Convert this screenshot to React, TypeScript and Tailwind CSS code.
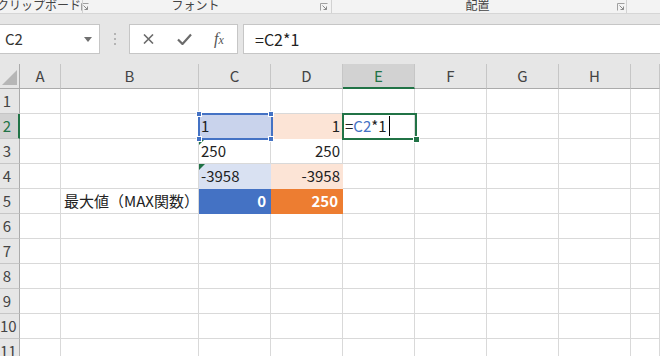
import React from 'react';

type Cell = {
  text?: React.ReactNode;
  right?: boolean;
  bold?: boolean;
  fill?: string;
  tri?: boolean;
};

const columns = ['A', 'B', 'C', 'D', 'E', 'F', 'G', 'H', ''];
const rows = [1, 2, 3, 4, 5, 6, 7, 8, 9, 10, 11];

const cells: Record<string, Cell> = {
  C2: { text: '1', fill: 'bg-[#c9d3ec] border-[#c9d3ec]' },
  D2: { text: '1', right: true, fill: 'bg-[#fce4d6] border-[#fce4d6]' },
  C3: { text: '250', tri: true },
  D3: { text: '250', right: true },
  C4: { text: '-3958', tri: true, fill: 'bg-[#d9e1f2] border-[#d9e1f2]' },
  D4: { text: '-3958', right: true, fill: 'bg-[#fce4d6] border-[#fce4d6]' },
  B5: { text: '最大値（MAX関数）' },
  C5: { text: '0', right: true, bold: true, fill: 'bg-[#4472c4] border-[#4472c4] text-white' },
  D5: { text: '250', right: true, bold: true, fill: 'bg-[#ed7d31] border-[#ed7d31] text-white' },
  E2: {
    text: (
      <>
        =<span className="text-[#4472c4]">C2</span>*1
      </>
    ),
  },
};

const Launcher = () => (
  <svg width="8" height="8" viewBox="0 0 8 8" className="mt-[3px] shrink-0">
    <path d="M0.5 7.5V0.5H7.5" fill="none" stroke="#a0a0a0" strokeWidth="1" />
    <path d="M2.5 2.5L6.5 6.5M6.5 3.5V6.5H3.5" fill="none" stroke="#8a8a8a" strokeWidth="1" />
  </svg>
);

const Ribbon = () => (
  <div className="flex h-[14px] overflow-hidden border-b border-[#d6d6d6] bg-[#f3f3f3] text-[12px] leading-[12px] text-[#444]">
    <div className="flex w-[82px] justify-between pr-[4px]">
      <span className="-ml-[3px] -mt-[1px] whitespace-nowrap">クリップボード</span>
      <Launcher />
    </div>
    <div className="h-full w-px bg-[#d2d2d2]" />
    <div className="flex w-[248px] pr-[3px]">
      <span className="-mt-[1px] flex-1 pr-[12px] text-center">フォント</span>
      <Launcher />
    </div>
    <div className="h-full w-px bg-[#d2d2d2]" />
    <div className="flex w-[294px] pr-[1px]">
      <span className="-mt-[1px] flex-1 pl-[6px] text-center">配置</span>
      <Launcher />
    </div>
    <div className="h-full w-px bg-[#d2d2d2]" />
  </div>
);

const FormulaBar = () => (
  <div className="flex h-[50px] items-start bg-[#e6e6e6] pt-[10px]">
    <div className="flex h-[30px] w-[100px] items-center justify-between border border-l-0 border-[#c6c6c6] bg-white pl-[5px] pr-[7px] text-[15px] text-[#333]">
      <span>C2</span>
      <svg width="8" height="5" viewBox="0 0 8 5">
        <path d="M0 0H8L4 5Z" fill="#707070" />
      </svg>
    </div>
    <div className="flex h-[30px] w-[29px] flex-col items-center justify-center gap-[3px]">
      <span className="h-[2px] w-[2px] bg-[#b4b4b4]" />
      <span className="h-[2px] w-[2px] bg-[#b4b4b4]" />
      <span className="h-[2px] w-[2px] bg-[#b4b4b4]" />
    </div>
    <div className="flex h-[30px] w-[109px] items-center border border-[#c6c6c6] bg-white pl-[13px]">
      <svg width="11" height="10" viewBox="0 0 11 10">
        <path d="M1 0.5L10 9.5M10 0.5L1 9.5" stroke="#6b6b6b" strokeWidth="1.6" />
      </svg>
      <svg width="15" height="12" viewBox="0 0 15 12" className="ml-[23px]">
        <path d="M1 6.5L5.5 11L14 1.5" fill="none" stroke="#6b6b6b" strokeWidth="2.2" />
      </svg>
      <span className="ml-[22px] font-['Liberation_Serif',serif] text-[16px] italic leading-none text-[#555]">
        f<span className="text-[12px]">x</span>
      </span>
    </div>
    <div className="ml-[5px] flex h-[30px] flex-1 items-center border border-r-0 border-[#c6c6c6] bg-white pl-[11px] text-[16px] text-[#222]">
      =C2*1
    </div>
  </div>
);

const Sheet = () => (
  <div className="relative">
    <div className="grid auto-rows-[25px] grid-cols-[20px_41px_138px_72px_72px_72px_72px_72px_72px_29px]">
      {/* 見出し行 */}
      <div className="relative border-r border-b border-[#ababab] bg-[#e6e6e6]">
        <svg width="20" height="25" viewBox="0 0 20 25" className="absolute inset-0">
          <path d="M2 21H17V6Z" fill="#b6b6b6" />
        </svg>
      </div>
      {columns.map((c, i) => (
        <div
          key={`h${i}`}
          className={
            c === 'E'
              ? 'flex items-center justify-center border-r border-b-2 border-r-[#c6c6c6] border-b-[#217346] bg-[#d2d2d2] pt-[2px] text-[15px] text-[#217346]'
              : 'flex items-center justify-center border-r border-b border-r-[#c6c6c6] border-b-[#ababab] bg-[#e6e6e6] text-[15px] text-[#444]'
          }
        >
          {c}
        </div>
      ))}

      {rows.map((r) => (
        <React.Fragment key={r}>
          <div
            className={
              r === 2
                ? 'flex items-center border-r-2 border-b border-r-[#217346] border-b-[#c6c6c6] bg-[#d2d2d2] text-[15px] text-[#217346]'
                : 'flex items-center border-r border-b border-r-[#ababab] border-b-[#c6c6c6] bg-[#e6e6e6] text-[15px] text-[#444]'
            }
          >
            <span className="w-[14px] text-center">{r}</span>
          </div>
          {columns.map((c, i) => {
            const cell = cells[`${c}${r}`];
            const base = cell?.fill ?? 'bg-white border-[#d9d9d9]';
            return (
              <div
                key={`${c}${r}${i}`}
                className={`relative flex items-center overflow-visible whitespace-nowrap border-r border-b text-[15px] ${base} ${
                  cell?.right ? 'justify-end' : 'justify-start'
                } ${cell?.bold ? 'pr-[4px] font-bold' : cell?.right ? 'pr-[2px]' : 'pl-[2px]'} ${
                  c === 'B' ? 'pl-[3px]' : ''
                } ${cell?.fill?.includes('text-white') ? '' : 'text-[#222]'}`}
              >
                {cell?.tri && (
                  <svg width="6" height="6" viewBox="0 0 6 6" className="absolute left-0 top-0">
                    <path d="M0 0H6L0 6Z" fill="#1e7145" />
                  </svg>
                )}
                {cell?.text}
              </div>
            );
          })}
        </React.Fragment>
      ))}
    </div>

    {/* C2 参照枠 */}
    <div className="pointer-events-none absolute left-[198px] top-[49px] h-[27px] w-[75px] border-2 border-[#4472c4]" />
    {[
      'left-[196px] top-[47px]',
      'left-[268px] top-[47px]',
      'left-[196px] top-[72px]',
      'left-[268px] top-[72px]',
    ].map((pos) => (
      <div key={pos} className={`absolute h-[6px] w-[6px] border border-white bg-[#4472c4] ${pos}`} />
    ))}

    {/* E2 選択枠 */}
    <div className="pointer-events-none absolute left-[342px] top-[49px] h-[27px] w-[75px] border-2 border-[#217346]" />
    <div className="absolute left-[413px] top-[72px] h-[7px] w-[7px] border border-white bg-[#217346]" />
    <div className="absolute left-[389px] top-[52px] h-[20px] w-px bg-black" />
  </div>
);

export default function App() {
  return (
    <div className="h-[356px] w-[660px] overflow-hidden bg-white font-['Noto_Sans_CJK_JP','Noto_Sans',sans-serif]">
      <Ribbon />
      <FormulaBar />
      <Sheet />
    </div>
  );
}
